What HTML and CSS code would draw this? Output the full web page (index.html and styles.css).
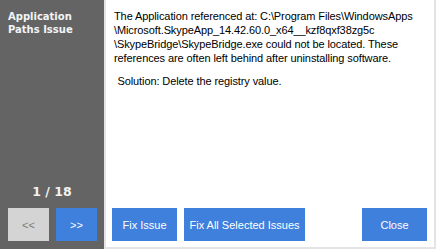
FILE: index.html
```html
<!DOCTYPE html>
<html>
<head>
<meta charset="utf-8">
<link rel="stylesheet" href="styles.css">
</head>
<body>
<div class="window">
  <aside class="side">
    <div class="title">Application<br>Paths Issue</div>
    <div class="side-bottom">
      <div class="counter">1 / 18</div>
      <div class="nav">
        <button class="btn btn-disabled">&lt;&lt;</button>
        <button class="btn">&gt;&gt;</button>
      </div>
    </div>
  </aside>
  <main class="content">
    <div class="message">
      <p class="desc">The Application referenced at: C:\Program Files\WindowsApps<br>\Microsoft.SkypeApp_14.42.60.0_x64__kzf8qxf38zg5c<br>\SkypeBridge\SkypeBridge.exe could not be located. These<br>references are often left behind after uninstalling software.</p>
      <p class="solution">Solution: Delete the registry value.</p>
    </div>
    <div class="actions">
      <div class="actions-left">
        <button class="btn btn-fix">Fix Issue</button>
        <button class="btn btn-fixall">Fix All Selected Issues</button>
      </div>
      <button class="btn btn-close">Close</button>
    </div>
  </main>
</div>
</body>
</html>
```

FILE: styles.css
```css
html, body {
  margin: 0;
  padding: 0;
  background: #ffffff;
}

.window {
  display: flex;
  width: 436px;
  height: 249px;
  overflow: hidden;
}

.side {
  width: 104px;
  flex: none;
  background: #646464;
  display: flex;
  flex-direction: column;
  justify-content: space-between;
  box-sizing: border-box;
  padding: 9.5px 0 8px 8px;
}

.title {
  font-family: "DejaVu Sans", Verdana, sans-serif;
  font-weight: bold;
  font-size: 10px;
  line-height: 13px;
  color: #f2f4f8;
}

.side-bottom {
  display: flex;
  flex-direction: column;
}

.counter {
  font-family: "DejaVu Sans", Verdana, sans-serif;
  font-weight: bold;
  font-size: 12.5px;
  line-height: 15px;
  color: #f2f2f2;
  text-align: center;
  padding-right: 8px;
  margin-bottom: 9px;
}

.nav {
  display: flex;
  gap: 7px;
}

.btn {
  border: none;
  margin: 0;
  padding: 0;
  height: 33px;
  background: #3f80dc;
  color: #ffffff;
  font-family: "Liberation Sans", Arial, sans-serif;
  font-size: 11px;
  cursor: default;
}

.nav .btn {
  width: 41px;
}

.btn-disabled {
  background: #d4d4d4;
  color: #7a7a7a;
}

.content {
  flex: 1;
  display: flex;
  flex-direction: column;
  justify-content: space-between;
  border-left: 2px solid #e4e4e4;
  border-right: 2px solid #e4e4e4;
  border-bottom: 2px solid #e4e4e4;
  padding: 0 7px 6px 6px;
}

.message {
  padding: 9px 0 0 2px;
  font-family: "Liberation Sans", Arial, sans-serif;
  font-size: 11px;
  line-height: 14px;
  letter-spacing: -0.1px;
  color: #000000;
  white-space: nowrap;
}

.message p {
  margin: 0;
}

.solution {
  margin-top: 9px !important;
  padding-left: 3.5px;
}

.actions {
  display: flex;
  justify-content: space-between;
  align-items: flex-end;
}

.actions-left {
  display: flex;
  gap: 7px;
}

.btn-fix {
  width: 65px;
}

.btn-fixall {
  width: 121px;
}

.btn-close {
  width: 65px;
}
```
